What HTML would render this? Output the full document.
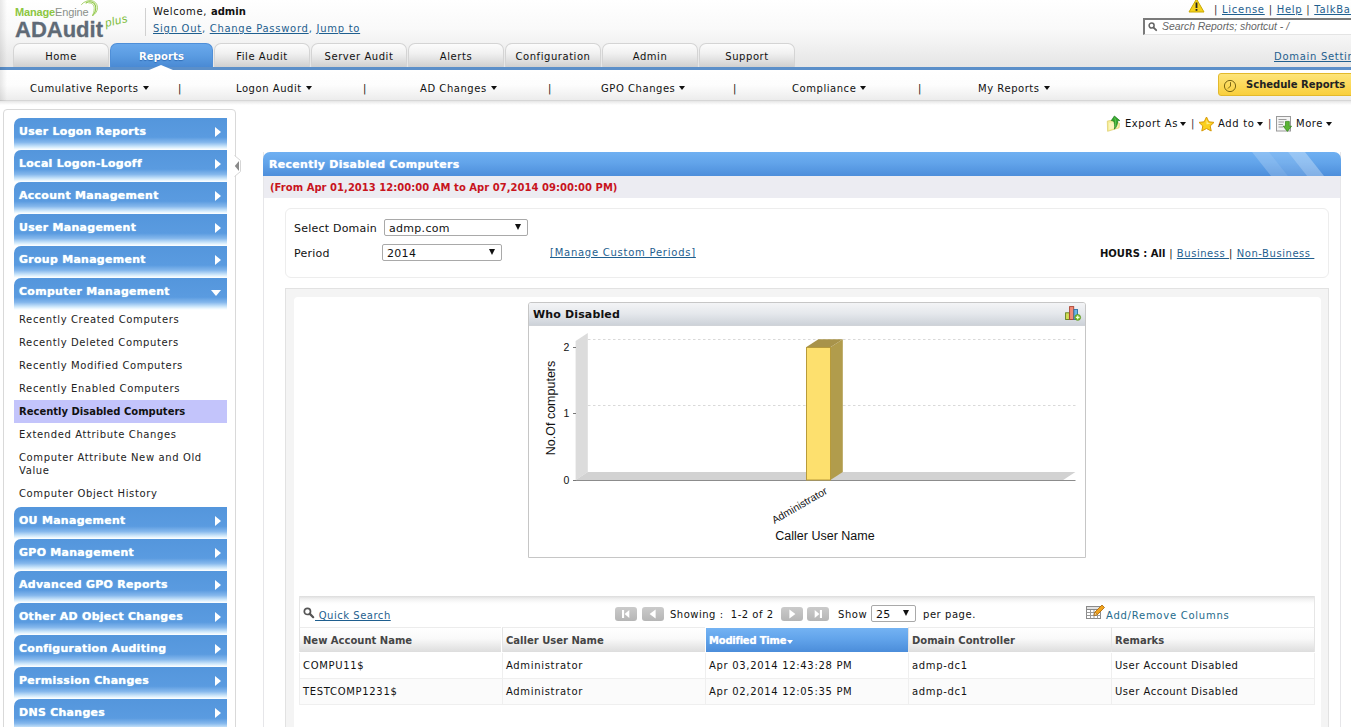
<!DOCTYPE html>
<html lang="en">
<head>
<meta charset="utf-8">
<title>ADAudit Plus - Recently Disabled Computers</title>
<style>
html,body{margin:0;padding:0;}
body{width:1351px;height:727px;overflow:hidden;position:relative;background:#fff;
 font-family:"DejaVu Sans","Liberation Sans",sans-serif;font-size:10px;letter-spacing:.55px;color:#111;}
.a{position:absolute;white-space:nowrap;line-height:12px;}
.b{font-weight:bold;letter-spacing:0;}
.b11{font-weight:bold;font-size:11px;letter-spacing:.2px;}
a,.lnk{color:#1f5f8f;text-decoration:underline;}
/* header */
#hdr{position:absolute;left:0;top:0;width:1351px;height:67px;background:linear-gradient(#ffffff 0%,#f9f9f9 45%,#e5e5e5 100%);}
#blue{position:absolute;left:0;top:67px;width:1351px;height:3px;background:#5b8fc9;}
#sub{position:absolute;left:0;top:70px;width:1351px;height:30px;background:linear-gradient(#ffffff 0%,#fdfdfd 50%,#ececec 100%);border-bottom:1px solid #d6d6d6;}
#subsh{position:absolute;left:0;top:101px;width:1351px;height:4px;background:linear-gradient(#e6e6e6,#ffffff);}
.tab{position:absolute;top:43px;height:23px;width:94px;border:1px solid #d4d4d4;border-bottom:none;border-radius:7px 7px 0 0;
 background:linear-gradient(#fcfcfc 0%,#f1f1f1 40%,#dedede 75%,#cfcfcf 100%);text-align:center;line-height:25px;font-size:10px;color:#111;}
.tab.on{background:linear-gradient(#6aa9ec 0%,#5b9ce2 50%,#4a8ad4 100%);border-color:#4f8fd8;color:#fff;font-weight:bold;font-size:10px;letter-spacing:.15px;width:101px;text-shadow:0 1px 1px #2f6cb5;}
.sm{top:83px;}
.car{display:inline-block;width:0;height:0;border-left:3px solid transparent;border-right:3px solid transparent;border-top:4px solid #111;vertical-align:middle;margin-left:4px;position:relative;top:-1px;}
/* sidebar */
#side{position:absolute;left:3px;top:109px;width:231px;height:640px;border:1px solid #d9d9d9;border-radius:4px;background:#fff;}
.sb{position:absolute;left:14px;width:213px;height:32px;border-radius:7px 0 0 0;
 background:linear-gradient(#5496dc 0%,#5a9be0 60%,#84b7ec 76%,#cfe8fb 90%,#f4fbff 97%,#ffffff 100%);}
.sb span{position:absolute;left:5px;top:7px;color:#fff;font-weight:bold;font-size:11px;letter-spacing:.27px;line-height:14px;white-space:nowrap;text-shadow:0 0 1px #dff;}
.sb i{position:absolute;left:201px;top:9px;width:0;height:0;border-top:5px solid transparent;border-bottom:5px solid transparent;border-left:6px solid #fff;}
.sb i.dn{left:197px;top:12px;border-left:5px solid transparent;border-right:5px solid transparent;border-top:6px solid #fff;border-bottom:none;}
.si{left:19px;color:#222;letter-spacing:.62px;}
.si.b{letter-spacing:0;color:#111;}
/* main */
#panel{position:absolute;left:263px;top:152px;width:1078px;height:600px;border-left:1px solid #e6e6e9;border-right:1px solid #e6e6e9;box-sizing:border-box;}
#ptitle{position:absolute;left:263px;top:152px;width:1078px;height:24px;border-radius:7px 7px 0 0;background:linear-gradient(#6fb0f2 0%,#62a4ea 45%,#4d8edb 100%);overflow:hidden;}
#pdate{position:absolute;left:264px;top:176px;width:1076px;height:22px;background:#ececf2;}
.box{position:absolute;box-sizing:border-box;}
select,.sel{position:absolute;box-sizing:border-box;border:1px solid #a9a9a9;background:#fff;border-radius:2px;font-size:11px;letter-spacing:.3px;line-height:15px;padding:1px 0 0 4px;color:#111;}
.sel:after{content:"";position:absolute;right:6px;top:4px;border-left:3.5px solid transparent;border-right:3.5px solid transparent;border-top:6px solid #111;}
/* table */
.pg{position:absolute;top:607px;width:22px;height:14px;border-radius:3px;background:linear-gradient(#cbcbcb,#b6b6b6);}
.pg svg{display:block;}
.td.z{background:#fbfbfb;}
.th{position:absolute;top:627px;height:25px;width:202px;background:linear-gradient(#ffffff 0%,#f9f9f9 45%,#dddddd 100%);border-left:1px solid #e4e4e4;border-top:1px solid #ececec;box-sizing:border-box;}
.th span,.td span{position:absolute;left:3px;top:7px;line-height:12px;white-space:nowrap;}
.th span{font-weight:bold;letter-spacing:0;color:#454545;}
.td{position:absolute;height:26px;width:203px;border-left:1px solid #efefef;border-bottom:1px solid #efefef;box-sizing:border-box;}
.td span{top:7px;letter-spacing:.68px;}
</style>
</head>
<body>
<div id="hdr"></div>
<div id="blue"></div>
<div id="sub"></div>
<div id="subsh"></div>
<div style="position:absolute;left:0;top:0;width:7px;height:101px;background:linear-gradient(to right,rgba(0,0,0,.09),rgba(0,0,0,0));"></div>

<!-- logo -->
<div class="a" style="left:15px;top:5px;font-family:'Liberation Sans',sans-serif;font-size:11px;letter-spacing:-.15px;line-height:14px;color:#8a8f8a;"><b style="color:#8cc63f;">Manage</b>Engine</div>
<svg class="a" style="left:78px;top:0;" width="24" height="20" viewBox="0 0 24 20" fill="none" stroke-linecap="round"><path d="M3.5 4.5 C8 -1.2 19 -1.2 19.5 7.5 C19.5 11 17.5 14 14.7 15.4" stroke="#9ccc5a" stroke-width=".9"/><path d="M8 3 C12 .5 17.5 2 17.8 8 C17.8 11 16.5 13.5 14.7 15.4" stroke="#8cc63f" stroke-width="1.1"/><path d="M11 3 C14 2.5 16.3 5 16.2 8.5 C16 11.5 15.5 13.5 14.7 15.4" stroke="#a9d46f" stroke-width=".9"/></svg>
<div class="a" style="left:15px;top:17px;font-family:'Liberation Sans',sans-serif;font-size:22px;font-weight:bold;letter-spacing:0;line-height:26px;color:#5f6a76;-webkit-text-stroke:.3px #5f6a76;">ADAudit</div>
<div class="a" style="left:107px;top:15px;font-family:'Liberation Sans',sans-serif;font-style:italic;font-size:11.5px;letter-spacing:.5px;line-height:16px;color:#7ebd3c;transform:rotate(-13deg);transform-origin:left bottom;">plus</div>
<div class="a" style="left:145px;top:8px;width:1px;height:28px;background:#d0d0d0;"></div>
<div class="a" style="left:153px;top:6px;letter-spacing:.65px;">Welcome, <b style="letter-spacing:0">admin</b></div>
<div class="a" style="left:153px;top:23px;letter-spacing:.72px;color:#1f5f8f;"><span class="lnk">Sign Out</span>, <span class="lnk">Change Password</span>, <span class="lnk">Jump to</span></div>

<!-- top right -->
<svg class="a" style="left:1188px;top:-2px;" width="17" height="15" viewBox="0 0 17 15"><path d="M8.5 1 L16 14 L1 14 Z" fill="#f5d21c" stroke="#c9a800" stroke-width="1" stroke-linejoin="round"/><rect x="7.6" y="4.5" width="1.8" height="5.5" fill="#222"/><rect x="7.6" y="11" width="1.8" height="1.8" fill="#222"/></svg>
<div class="a" style="left:1214px;top:4px;letter-spacing:.72px;color:#333;">| <span class="lnk">License</span> | <span class="lnk">Help</span> | <span class="lnk">TalkBack</span></div>
<div class="a" style="left:1143px;top:18px;width:230px;height:17px;box-sizing:border-box;border:1px solid #e4e4e4;border-top:2px solid #7a7a7a;border-left:2px solid #7a7a7a;background:#fff;"></div>
<svg class="a" style="left:1148px;top:22px;" width="10" height="10" viewBox="0 0 10 10"><circle cx="3.6" cy="3.6" r="2.5" fill="none" stroke="#666" stroke-width="1.5"/><path d="M5.6 5.6 L8.2 8.2" stroke="#666" stroke-width="1.9" stroke-linecap="round"/></svg>
<div class="a" style="left:1162px;top:21px;font-family:'Liberation Sans',sans-serif;font-style:italic;font-size:10.4px;letter-spacing:0;color:#666;">Search Reports; shortcut - /</div>
<div class="a lnk" style="left:1274px;top:51px;letter-spacing:.7px;">Domain Settings</div>

<!-- tabs -->
<div class="tab" style="left:13px;">Home</div>
<div class="tab on" style="left:110px;">Reports</div>
<div class="tab" style="left:214px;">File Audit</div>
<div class="tab" style="left:311px;">Server Audit</div>
<div class="tab" style="left:408px;">Alerts</div>
<div class="tab" style="left:505px;">Configuration</div>
<div class="tab" style="left:602px;">Admin</div>
<div class="tab" style="left:699px;">Support</div>
<div class="a" style="left:149px;top:65px;width:0;height:0;border-left:12px solid transparent;border-right:12px solid transparent;border-bottom:5px solid #fff;"></div>

<!-- sub menu -->
<div class="a sm" style="left:30px;">Cumulative Reports<i class="car"></i></div>
<div class="a sm" style="left:178px;">|</div>
<div class="a sm" style="left:236px;">Logon Audit<i class="car"></i></div>
<div class="a sm" style="left:363px;">|</div>
<div class="a sm" style="left:420px;">AD Changes<i class="car"></i></div>
<div class="a sm" style="left:548px;">|</div>
<div class="a sm" style="left:601px;">GPO Changes<i class="car"></i></div>
<div class="a sm" style="left:733px;">|</div>
<div class="a sm" style="left:792px;">Compliance<i class="car"></i></div>
<div class="a sm" style="left:918px;">|</div>
<div class="a sm" style="left:978px;">My Reports<i class="car"></i></div>
<div class="a" style="left:1218px;top:73px;width:140px;height:23px;box-sizing:border-box;border:1px solid #e3b92c;border-radius:3px;background:linear-gradient(#fde47a,#f9cf3c);"></div>
<svg class="a" style="left:1223px;top:79px;" width="14" height="14" viewBox="0 0 14 14"><circle cx="7" cy="7" r="5.6" fill="none" stroke="#7a6614" stroke-width="1"/><path d="M7.5 3.2 V7 L5 9.5" fill="none" stroke="#7a6614" stroke-width="1"/></svg>
<div class="a b" style="left:1246px;top:79px;color:#222;">Schedule Reports</div>

<!-- sidebar -->
<div id="side"></div>
<svg class="a" style="left:234px;top:155px;" width="8" height="22" viewBox="0 0 8 22"><path d="M0 0 L0.5 0.5 L6.5 5.5 V16.5 L0.5 21.5 L0 22 Z" fill="#fff"/><path d="M0.5 0.5 L6.5 5.5 V16.5 L0.5 21.5" fill="none" stroke="#d6d6d6" stroke-width="1"/><path d="M5 6 V16 L0.8 11 Z" fill="#8a8a8a"/></svg>
<div class="sb" style="top:118px;"><span>User Logon Reports</span><i></i></div>
<div class="sb" style="top:150px;"><span>Local Logon-Logoff</span><i></i></div>
<div class="sb" style="top:182px;"><span>Account Management</span><i></i></div>
<div class="sb" style="top:214px;"><span>User Management</span><i></i></div>
<div class="sb" style="top:246px;"><span>Group Management</span><i></i></div>
<div class="sb" style="top:278px;"><span>Computer Management</span><i class="dn"></i></div>
<div class="a si" style="top:314px;">Recently Created Computers</div>
<div class="a si" style="top:337px;">Recently Deleted Computers</div>
<div class="a si" style="top:360px;">Recently Modified Computers</div>
<div class="a si" style="top:383px;">Recently Enabled Computers</div>
<div class="a" style="left:14px;top:400px;width:213px;height:23px;background:#c3c4fb;"></div>
<div class="a si b" style="top:406px;">Recently Disabled Computers</div>
<div class="a si" style="top:429px;">Extended Attribute Changes</div>
<div class="a si" style="top:451px;line-height:13px;">Computer Attribute New and Old<br>Value</div>
<div class="a si" style="top:488px;">Computer Object History</div>
<div class="sb" style="top:507px;"><span>OU Management</span><i></i></div>
<div class="sb" style="top:539px;"><span>GPO Management</span><i></i></div>
<div class="sb" style="top:571px;"><span>Advanced GPO Reports</span><i></i></div>
<div class="sb" style="top:603px;"><span>Other AD Object Changes</span><i></i></div>
<div class="sb" style="top:635px;"><span>Configuration Auditing</span><i></i></div>
<div class="sb" style="top:667px;"><span>Permission Changes</span><i></i></div>
<div class="sb" style="top:699px;"><span>DNS Changes</span><i></i></div>

<!-- toolbar -->
<svg class="a" style="left:1106px;top:115px;" width="16" height="18" viewBox="0 0 16 18"><path d="M1.3 6.1 L7.3 5 L13.5 8.3 L13.1 12.8 L7.3 14.6 L1.6 16.3 Z" fill="#f6ee98" stroke="#dccb66" stroke-width=".7" stroke-linejoin="round"/><path d="M3 8 L8 7 L12.3 9.3 L12 12.2 L7.2 13.6 L3.2 14.8 Z" fill="#fbf5bd"/><path d="M8.4 1 L13.8 5.6 L11.6 5.8 C11.8 9 10.6 12 8.4 14.2 C8.9 11 8.6 8 7.6 6 L5.3 5.6 Z" fill="#35a62e" stroke="#1c7a1c" stroke-width=".7" stroke-linejoin="round"/><path d="M8.6 2.6 L9.6 5.4 C9.8 8 9.6 10.5 8.9 12.4" fill="none" stroke="#7fdc6a" stroke-width=".8" opacity=".7"/></svg>
<div class="a" style="left:1125px;top:118px;letter-spacing:.55px;">Export As</div>
<div class="a" style="left:1180px;top:122px;width:0;height:0;border-left:3px solid transparent;border-right:3px solid transparent;border-top:4px solid #111;"></div>
<div class="a" style="left:1191px;top:118px;color:#333;">|</div>
<svg class="a" style="left:1198px;top:116px;" width="17" height="16" viewBox="0 0 17 16"><path d="M8.5 1 L10.8 5.8 L16 6.4 L12.2 10 L13.2 15 L8.5 12.5 L3.8 15 L4.8 10 L1 6.4 L6.2 5.8 Z" fill="#fbd01e" stroke="#d79a08" stroke-width="1" stroke-linejoin="round"/><path d="M8.5 3.5 L9.9 6.8 L13 7.2 L8.5 8.5 Z" fill="#fff3a8" opacity=".8"/></svg>
<div class="a" style="left:1218px;top:118px;letter-spacing:.65px;">Add to</div>
<div class="a" style="left:1257px;top:122px;width:0;height:0;border-left:3px solid transparent;border-right:3px solid transparent;border-top:4px solid #111;"></div>
<div class="a" style="left:1268px;top:118px;color:#333;">|</div>
<svg class="a" style="left:1276px;top:116px;" width="16" height="16" viewBox="0 0 16 16"><rect x=".5" y=".5" width="14" height="14.5" fill="#f4f4f4" stroke="#9a9a9a" stroke-width="1"/><path d="M2.5 3.5 H10.5 M2.5 6 H8 M2.5 8.5 H7 M2.5 11 H7" stroke="#9c9c9c" stroke-width="1"/><path d="M9.5 5.4 H13.3 V10.2 H15.6 L11.4 15.4 L7.2 10.2 H9.5 Z" fill="#5cb535" stroke="#2f8219" stroke-width=".7" stroke-linejoin="round"/></svg>
<div class="a" style="left:1296px;top:118px;letter-spacing:.5px;">More</div>
<div class="a" style="left:1326px;top:122px;width:0;height:0;border-left:3px solid transparent;border-right:3px solid transparent;border-top:4px solid #111;"></div>

<!-- panel -->
<div id="panel"></div>
<div id="ptitle">
 <svg style="position:absolute;left:985px;top:0;" width="92" height="24" viewBox="0 0 92 24"><path d="M4 0 H21 L40 24 H23 Z" fill="#fff" opacity=".2"/><path d="M21 0 H40 L59 24 H40 Z" fill="#fff" opacity=".12"/><path d="M40 0 H57 L76 24 H59 Z" fill="#fff" opacity=".3"/></svg>
</div>
<div class="a b11" style="left:269px;top:158px;color:#fff;line-height:14px;letter-spacing:.28px;text-shadow:0 0 1px #def;">Recently Disabled Computers</div>
<div id="pdate"></div>
<div class="a b" style="left:270px;top:182px;color:#c8141d;letter-spacing:.03px;">(From Apr 01,2013 12:00:00 AM to Apr 07,2014 09:00:00 PM)</div>

<!-- filter box -->
<div class="box" style="left:285px;top:208px;width:1044px;height:70px;border:1px solid #ededed;border-radius:6px;background:#fff;"></div>
<div class="a" style="left:294px;top:222px;font-size:11px;letter-spacing:.22px;line-height:14px;">Select Domain</div>
<div class="sel" style="left:384px;top:219px;width:144px;height:17px;">admp.com</div>
<div class="a" style="left:294px;top:247px;font-size:11px;letter-spacing:.22px;line-height:14px;">Period</div>
<div class="sel" style="left:382px;top:244px;width:120px;height:17px;">2014</div>
<div class="a lnk" style="left:550px;top:247px;letter-spacing:.75px;">[Manage Custom Periods]</div>
<div class="a" style="left:1100px;top:248px;"><b style="letter-spacing:0;">HOURS : All</b> | <span class="lnk">Business&nbsp;</span>| <span class="lnk">Non-Business&nbsp;</span></div>

<!-- chart container -->
<div class="box" style="left:285px;top:288px;width:1044px;height:460px;border:1px solid #e2e2e2;background:#f4f4f4;"></div>
<div class="box" style="left:294px;top:297px;width:1027px;height:460px;border-radius:4px;background:#fff;"></div>

<!-- chart -->
<div class="box" style="left:528px;top:302px;width:558px;height:256px;border:1px solid #c6c6c6;border-radius:3px 3px 0 0;background:#fff;"></div>
<div class="box" style="left:529px;top:303px;width:556px;height:23px;border-radius:2px 2px 0 0;background:linear-gradient(#f3f4f6 0%,#e5e8ec 48%,#cdd2d9 100%);border-bottom:1px solid #d0d3d8;"></div>
<div class="a b11" style="left:533px;top:308px;line-height:14px;color:#111;letter-spacing:.15px;">Who Disabled</div>
<svg class="a" style="left:1064px;top:305px;" width="18" height="16" viewBox="0 0 18 16"><rect x="1.6" y="7.8" width="3.8" height="6.7" fill="#d4de58" stroke="#5f7f1c" stroke-width=".9"/><rect x="5.6" y="1.6" width="4.1" height="12.9" fill="#f28b78" stroke="#a8412f" stroke-width=".9"/><rect x="9.9" y="4.5" width="3.6" height="10" fill="#6cb6e6" stroke="#2d72a6" stroke-width=".9"/><circle cx="13.7" cy="12.4" r="2.9" fill="#7fbf2e" stroke="#558f1b" stroke-width=".7"/><path d="M11.9 12.4 H15.5 M13.7 10.6 V14.2" stroke="#f4ffe0" stroke-width="1.1"/></svg>
<svg class="a" style="left:528px;top:326px;" width="558" height="231" viewBox="528 326 558 231" font-family="'Liberation Sans',sans-serif" fill="#111" letter-spacing="0">
 <g stroke="#d9d9d9" stroke-width="1" stroke-dasharray="2.5 2.5"><path d="M588 339.5 H1075.5"/><path d="M588 405.5 H1075.5"/></g>
 <path d="M575.6 480 L587.8 472 L587.8 333 L575.6 341 Z" fill="#dcdcdc"/>
 <path d="M575.6 480 L587.8 472 L1075.4 472 L1063.2 480 Z" fill="#d2d2d2"/>
 <path d="M574 480.5 H1075.5" stroke="#8c8c8c" stroke-width="1"/>
 <g stroke="#777" stroke-width="1"><path d="M573 347.5 H576"/><path d="M573 413.5 H576"/><path d="M573 480.5 H576"/></g>
 <path d="M830.4 480 L842.8 472 L842.8 339.3 L830.4 347.3 Z" fill="#b19c4c"/>
 <path d="M806 347.3 L830.4 347.3 L842.8 339.3 L818.4 339.3 Z" fill="#a8934a"/>
 <rect x="806.5" y="347.5" width="24" height="132.5" fill="#fde06e" stroke="#b89b3a" stroke-width="1"/>
 <g font-size="10.5px" text-anchor="end"><text x="569.3" y="351">2</text><text x="569.3" y="417">1</text><text x="569.3" y="484">0</text></g>
 <text font-size="12.5px" text-anchor="middle" transform="translate(554.5,408) rotate(-90)">No.Of computers</text>
 <text font-size="10.5px" text-anchor="end" transform="translate(828,493) rotate(-30)">Administrator</text>
 <text font-size="12.5px" text-anchor="middle" x="825" y="540">Caller User Name</text>
</svg>

<!-- table toolbar -->
<div class="box" style="left:299px;top:596px;width:1016px;height:32px;border-left:1px solid #e6e6e6;border-right:1px solid #e6e6e6;background:linear-gradient(#dcdcdc 0,#f1f1f1 3px,#fdfdfd 7px,#ffffff 9px);"></div>
<svg class="a" style="left:303px;top:607px;" width="12" height="12" viewBox="0 0 12 12"><circle cx="4.4" cy="4.4" r="3.1" fill="#fff" stroke="#555" stroke-width="1.7"/><path d="M6.9 6.9 L10.2 10.2" stroke="#555" stroke-width="2.2" stroke-linecap="round"/></svg>
<div class="a lnk" style="left:315px;top:610px;letter-spacing:.52px;">&nbsp;Quick Search</div>
<div class="pg" style="left:615px;"><svg width="22" height="14" viewBox="0 0 22 14"><rect x="7" y="3" width="2.1" height="8" fill="#fff"/><path d="M14.3 3 V11 L9.6 7 Z" fill="#fff"/></svg></div>
<div class="pg" style="left:642px;"><svg width="22" height="14" viewBox="0 0 22 14"><path d="M13.6 2.6 V11.4 L7.6 7 Z" fill="#fff"/></svg></div>
<div class="a" style="left:670px;top:609px;letter-spacing:.5px;">Showing :&nbsp; 1-2 of 2</div>
<div class="pg" style="left:781px;"><svg width="22" height="14" viewBox="0 0 22 14"><path d="M8.4 2.6 V11.4 L14.4 7 Z" fill="#fff"/></svg></div>
<div class="pg" style="left:807px;"><svg width="22" height="14" viewBox="0 0 22 14"><rect x="12.9" y="3" width="2.1" height="8" fill="#fff"/><path d="M7.7 3 V11 L12.4 7 Z" fill="#fff"/></svg></div>
<div class="a" style="left:838px;top:609px;">Show</div>
<div class="sel" style="left:871px;top:605px;width:45px;height:17px;">25</div>
<div class="a" style="left:923px;top:609px;">per page.</div>
<svg class="a" style="left:1086px;top:604px;" width="20" height="16" viewBox="0 0 20 16"><rect x=".5" y="2.5" width="14" height="12" fill="#fff" stroke="#8a8a8a"/><path d="M.5 5.5 H14.5 M.5 8.5 H14.5 M.5 11.5 H14.5 M4.5 2.5 V14.5 M8 2.5 V14.5 M11.5 2.5 V14.5" stroke="#9a9a9a" stroke-width="1"/><rect x=".5" y="2.5" width="14" height="3" fill="#e2e2e2" stroke="#8a8a8a"/><path d="M8 11.5 L9 8 L16 1 L18.5 3.5 L11.5 10.5 Z" fill="#f0a21c" stroke="#a86508" stroke-width=".8" stroke-linejoin="round"/><path d="M8 11.5 L9 8 L11.5 10.5 Z" fill="#f6d9a0" stroke="#a86508" stroke-width=".6"/></svg>
<div class="a" style="left:1106px;top:610px;color:#256b8c;letter-spacing:.75px;">Add/Remove Columns</div>

<!-- table -->
<div class="th" style="left:299px;"><span>New Account Name</span></div>
<div class="th" style="left:502px;width:203px;"><span>Caller User Name</span></div>
<div class="th" style="left:706px;top:628px;height:24px;border-top:none;width:202px;background:linear-gradient(#74b3f3 0%,#62a4eb 45%,#4b8dda 100%);border-left:none;"><span style="color:#fff;left:3px;letter-spacing:-.22px;text-shadow:0 0 1px #cfe4fa;">Modified Time</span><i style="position:absolute;left:81px;top:12px;width:0;height:0;border-left:3.5px solid transparent;border-right:3.5px solid transparent;border-top:4px solid #fff;"></i></div>
<div class="th" style="left:908px;width:203px;"><span>Domain Controller</span></div>
<div class="th" style="left:1111px;width:204px;border-right:1px solid #e4e4e4;"><span>Remarks</span></div>

<div class="td" style="left:299px;top:653px;"><span>COMPU11$</span></div>
<div class="td" style="left:502px;top:653px;"><span>Administrator</span></div>
<div class="td" style="left:705px;top:653px;"><span>Apr 03,2014 12:43:28 PM</span></div>
<div class="td" style="left:908px;top:653px;"><span>admp-dc1</span></div>
<div class="td" style="left:1111px;top:653px;width:204px;border-right:1px solid #efefef;"><span style="letter-spacing:.5px">User Account Disabled</span></div>
<div class="td z" style="left:299px;top:679px;"><span>TESTCOMP1231$</span></div>
<div class="td z" style="left:502px;top:679px;"><span>Administrator</span></div>
<div class="td z" style="left:705px;top:679px;"><span>Apr 02,2014 12:05:35 PM</span></div>
<div class="td z" style="left:908px;top:679px;"><span>admp-dc1</span></div>
<div class="td z" style="left:1111px;top:679px;width:204px;border-right:1px solid #efefef;"><span style="letter-spacing:.5px">User Account Disabled</span></div>


</body>
</html>
